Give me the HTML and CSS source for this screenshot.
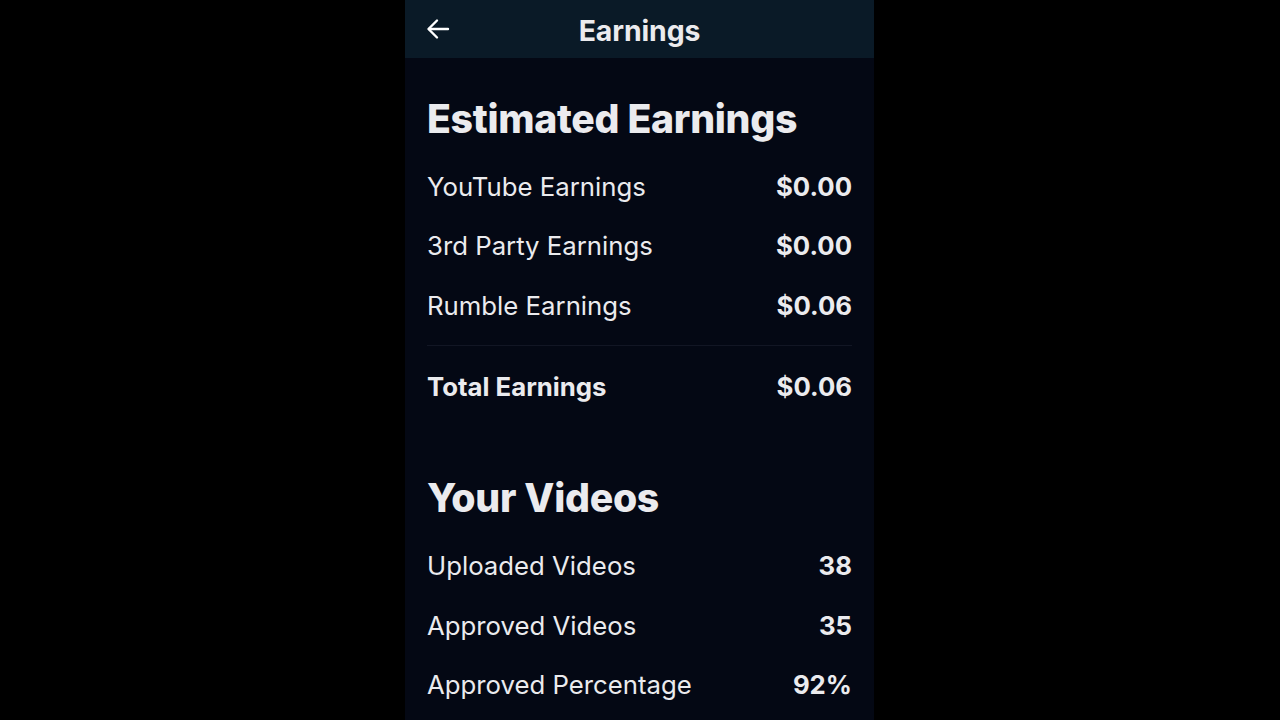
FILE: index.html
```html
<!DOCTYPE html>
<html lang="en">
<head>
<meta charset="utf-8">
<title>Earnings</title>
<link rel="stylesheet" href="styles.css">
</head>
<body>
<div class="stage">
  <div class="phone">
    <header class="topbar">
      <button class="back" aria-label="Back">
        <svg width="24" height="22" viewBox="0 0 24 22" fill="none" stroke="#ffffff" stroke-width="2.4" stroke-linecap="round" stroke-linejoin="round">
          <path d="M22 11H3"/>
          <path d="M11 2.5L2.5 11L11 19.5"/>
        </svg>
      </button>
      <h1 class="title">Earnings</h1>
    </header>
    <main class="content">
      <section class="section">
        <h2 class="heading">Estimated Earnings</h2>
        <div class="row"><span class="label">YouTube Earnings</span><span class="value">$0.00</span></div>
        <div class="row"><span class="label">3rd Party Earnings</span><span class="value">$0.00</span></div>
        <div class="row"><span class="label">Rumble Earnings</span><span class="value">$0.06</span></div>
        <div class="divider"></div>
        <div class="row total"><span class="label">Total Earnings</span><span class="value">$0.06</span></div>
      </section>
      <section class="section videos">
        <h2 class="heading">Your Videos</h2>
        <div class="row"><span class="label">Uploaded Videos</span><span class="value">38</span></div>
        <div class="row"><span class="label">Approved Videos</span><span class="value">35</span></div>
        <div class="row"><span class="label">Approved Percentage</span><span class="value">92%</span></div>
      </section>
    </main>
  </div>
</div>
</body>
</html>
```

FILE: styles.css
```css
* { box-sizing: border-box; }
html, body {
  margin: 0;
  padding: 0;
  background: #000000;
  height: 100%;
  overflow: hidden;
}
body {
  font-family: Inter, "Noto Sans", "Liberation Sans", sans-serif;
  color: #ebebee;
}
.stage {
  display: flex;
  justify-content: center;
  height: 720px;
}
.phone {
  width: 469px;
  margin-left: -1px;
  height: 720px;
  background: #040814;
  display: flex;
  flex-direction: column;
}
.topbar {
  height: 58px;
  background: #0a1a27;
  display: flex;
  align-items: center;
  justify-content: center;
  position: relative;
  flex: none;
}
.back {
  position: absolute;
  left: 21px;
  top: 18px;
  background: none;
  border: 0;
  padding: 0;
  width: 24px;
  height: 22px;
  display: flex;
}
.title {
  margin: 0;
  font-size: 28.4px;
  font-weight: 700;
  letter-spacing: -0.1px;
  color: #ebebee;
  line-height: 58px;
  margin-top: 3px;
}
.content {
  padding: 36px 22px 0 22px;
}
.heading {
  margin: 0 0 13px 0;
  font-size: 39.2px;
  font-weight: 800;
  line-height: 50px;
  letter-spacing: -0.3px;
  color: #ebebee;
}
.row {
  display: flex;
  justify-content: space-between;
  align-items: center;
  height: 59.3px;
  font-size: 25.75px;
}
.label {
  font-weight: 400;
  color: #ebebee;
}
.value {
  font-weight: 700;
  color: #ebebee;
}
.total .label {
  font-weight: 700;
}
.divider {
  height: 1px;
  background: #121624;
  margin: 10px 0 11px 0;
}
.videos {
  margin-top: 57px;
}
```
